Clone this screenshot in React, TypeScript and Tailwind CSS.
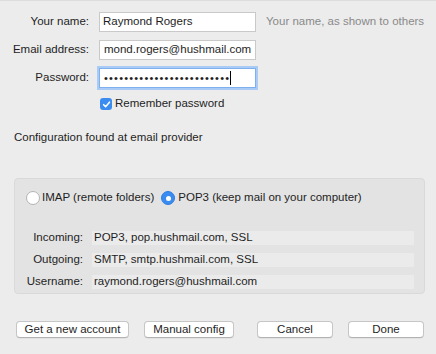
import React from "react";

const INFO = [
  { label: "Incoming:", value: "POP3, pop.hushmail.com, SSL" },
  { label: "Outgoing:", value: "SMTP, smtp.hushmail.com, SSL" },
  { label: "Username:", value: "raymond.rogers@hushmail.com" },
];

function Radio({ checked }: { checked?: boolean }) {
  return checked ? (
    <span className="flex h-[14px] w-[14px] shrink-0 items-center justify-center rounded-full bg-[#3b8cf0] border border-[#2f7de0]">
      <span className="h-[5px] w-[5px] rounded-full bg-white" />
    </span>
  ) : (
    <span className="h-[14px] w-[14px] shrink-0 rounded-full border border-[#b4b4b4] bg-white" />
  );
}

function Btn({ children, className = "" }: { children: React.ReactNode; className?: string }) {
  return (
    <button
      className={`h-[17px] rounded-[4px] border border-[#c6c6c6] border-b-[#b2b2b2] bg-white text-[11.5px] leading-none text-[#1e1e1e] shadow-[0_0.5px_0.5px_rgba(0,0,0,0.08)] ${className}`}
    >
      {children}
    </button>
  );
}

export default function App() {
  return (
    <div className="h-[354px] w-[436px] overflow-hidden border-t border-[#dcdcdc] bg-[#ececec] font-['Liberation_Sans',Arial,sans-serif] text-[11.5px] text-[#1e1e1e]">
      <div className="grid grid-cols-[75px_157px_1fr] items-center gap-x-[10px] gap-y-[8px] pl-[14px] pt-[11px]">
        <div className="flex justify-end whitespace-nowrap">Your name:</div>
        <div className="flex h-[20px] items-center border border-[#c9c9c9] bg-white pl-[3px]">Raymond Rogers</div>
        <div className="whitespace-nowrap text-[#8a8a8a]">Your name, as shown to others</div>

        <div className="flex justify-end whitespace-nowrap">Email address:</div>
        <div className="flex h-[20px] items-center overflow-hidden whitespace-nowrap border border-[#c9c9c9] bg-white pl-[4px]">
          mond.rogers@hushmail.com
        </div>
        <div />

        <div className="flex justify-end whitespace-nowrap">Password:</div>
        <div className="flex h-[20px] items-center overflow-hidden whitespace-nowrap border border-[#7fb0ee] bg-white pl-[4px] shadow-[0_0_0_2px_#a9cbf5]">
          <span className="text-[11px] tracking-[1.2px]">{"•".repeat(25)}</span>
          <span className="h-[14px] w-[1px] bg-black" />
        </div>
        <div />
      </div>

      <div className="ml-[100px] mt-[10px] flex h-[12px] items-center gap-[3px]">
        <span className="flex h-[12px] w-[12px] items-center justify-center rounded-[3px] bg-[#3b8cf0]">
          <svg width="9" height="9" viewBox="0 0 10 10" fill="none">
            <path d="M1.8 5.2 L4 7.4 L8.3 2.4" stroke="white" strokeWidth="1.7" strokeLinecap="round" strokeLinejoin="round" />
          </svg>
        </span>
        <span>Remember password</span>
      </div>

      <div className="ml-[14px] mt-[20px] h-[15px] leading-[15px]">Configuration found at email provider</div>

      <div className="ml-[14px] mt-[33px] h-[116px] w-[411px] rounded-[4px] border border-[#d9d9d9] bg-[#e3e3e3] pl-[11px] pt-[12px]">
        <div className="flex h-[14px] items-center">
          <Radio />
          <span className="ml-[2px]">IMAP (remote folders)</span>
          <span className="ml-[7px]">
            <Radio checked />
          </span>
          <span className="ml-[3px]">POP3 (keep mail on your computer)</span>
        </div>

        <div className="mt-[26px] flex flex-col gap-[8px]">
          {INFO.map((row) => (
            <div key={row.label} className="flex h-[14px] items-center">
              <div className="w-[57px] text-right">{row.label}</div>
              <div className="ml-[9px] flex h-[14px] w-[322px] items-center bg-[#ebebeb] pl-[2px]">{row.value}</div>
            </div>
          ))}
        </div>
      </div>

      <div className="mt-[27px] flex pl-[16px]">
        <Btn className="w-[113px]">Get a new account</Btn>
        <Btn className="ml-[15px] w-[90px]">Manual config</Btn>
        <Btn className="ml-[23px] w-[76px]">Cancel</Btn>
        <Btn className="ml-[15px] w-[76px]">Done</Btn>
      </div>
    </div>
  );
}
